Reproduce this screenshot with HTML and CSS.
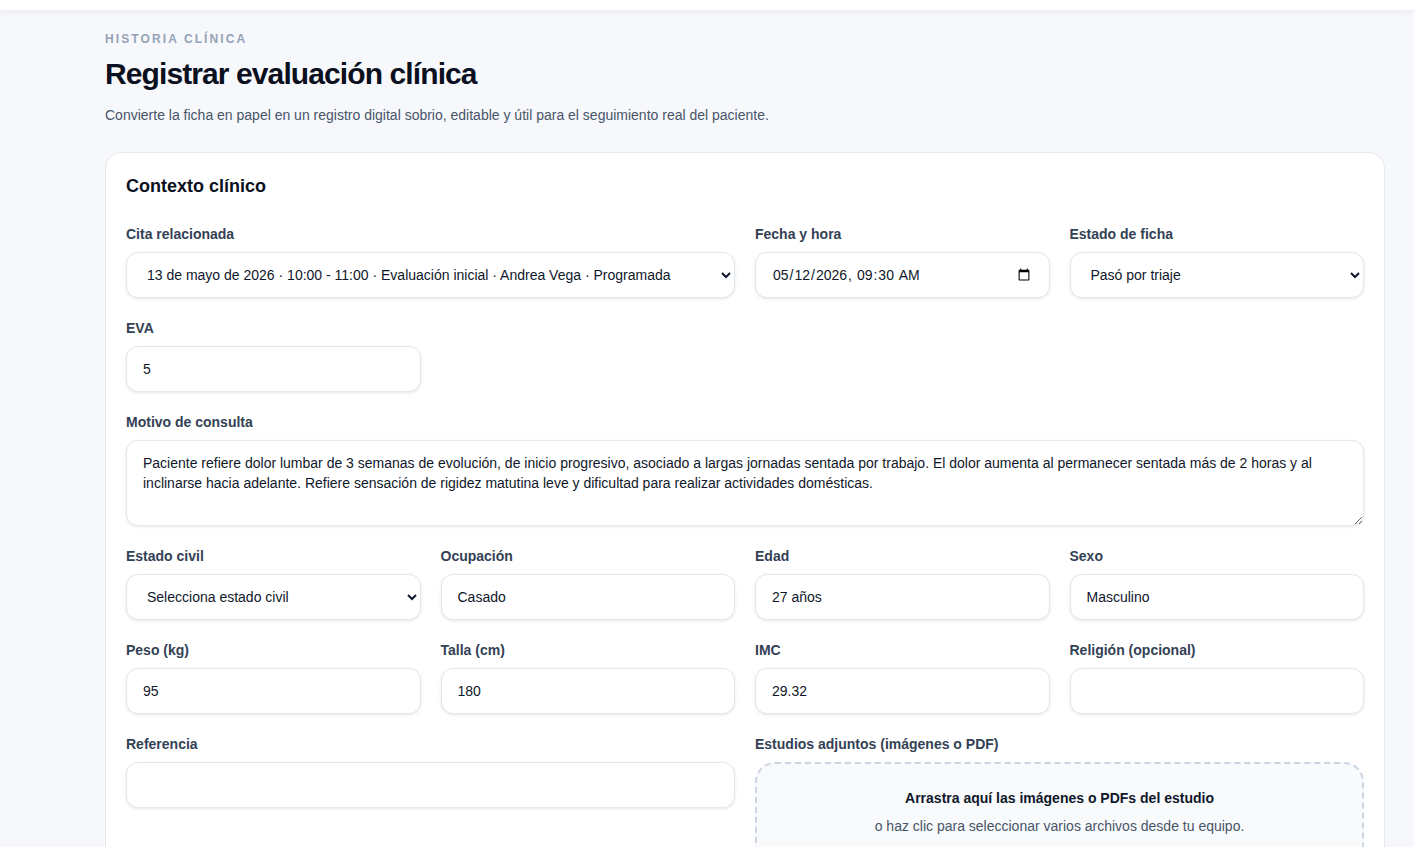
FILE: index.html
```html
<!DOCTYPE html>
<html lang="es">
  <head>
    <meta charset="UTF-8" />
    <meta name="viewport" content="width=device-width, initial-scale=1.0" />
    <title>Registrar evaluación clínica</title>
    <link rel="stylesheet" href="styles.css">
  </head>
  <body>
    <header class="topbar"></header>
    <main class="page">
      <p class="eyebrow">Historia clínica</p>
      <h1>Registrar evaluación clínica</h1>
      <p class="intro">Convierte la ficha en papel en un registro digital sobrio, editable y útil para el seguimiento real del paciente.</p>

      <section class="card">
        <h2>Contexto clínico</h2>
        <form class="grid">
          <div class="field span-2">
            <label for="cita">Cita relacionada</label>
            <select id="cita">
              <option>13 de mayo de 2026 · 10:00 - 11:00 · Evaluación inicial · Andrea Vega · Programada</option>
            </select>
          </div>
          <div class="field">
            <label for="fecha">Fecha y hora</label>
            <input type="datetime-local" id="fecha" value="2026-05-12T09:30" />
          </div>
          <div class="field">
            <label for="estado">Estado de ficha</label>
            <select id="estado">
              <option>Pasó por triaje</option>
            </select>
          </div>

          <div class="field">
            <label for="eva">EVA</label>
            <input type="text" id="eva" value="5" />
          </div>

          <div class="field span-4">
            <label for="motivo">Motivo de consulta</label>
            <textarea id="motivo" spellcheck="false">Paciente refiere dolor lumbar de 3 semanas de evolución, de inicio progresivo, asociado a largas jornadas sentada por trabajo. El dolor aumenta al permanecer sentada más de 2 horas y al inclinarse hacia adelante. Refiere sensación de rigidez matutina leve y dificultad para realizar actividades domésticas.</textarea>
          </div>

          <div class="field">
            <label for="civil">Estado civil</label>
            <select id="civil">
              <option>Selecciona estado civil</option>
            </select>
          </div>
          <div class="field">
            <label for="ocupacion">Ocupación</label>
            <input type="text" id="ocupacion" value="Casado" />
          </div>
          <div class="field">
            <label for="edad">Edad</label>
            <input type="text" id="edad" value="27 años" />
          </div>
          <div class="field">
            <label for="sexo">Sexo</label>
            <input type="text" id="sexo" value="Masculino" />
          </div>

          <div class="field">
            <label for="peso">Peso (kg)</label>
            <input type="text" id="peso" value="95" />
          </div>
          <div class="field">
            <label for="talla">Talla (cm)</label>
            <input type="text" id="talla" value="180" />
          </div>
          <div class="field">
            <label for="imc">IMC</label>
            <input type="text" id="imc" value="29.32" />
          </div>
          <div class="field">
            <label for="religion">Religión (opcional)</label>
            <input type="text" id="religion" />
          </div>

          <div class="field span-2">
            <label for="referencia">Referencia</label>
            <input type="text" id="referencia" />
          </div>
          <div class="field span-2">
            <label>Estudios adjuntos (imágenes o PDF)</label>
            <div class="dropzone">
              <strong>Arrastra aquí las imágenes o PDFs del estudio</strong>
              <span>o haz clic para seleccionar varios archivos desde tu equipo.</span>
            </div>
          </div>
        </form>
      </section>
    </main>
  </body>
</html>
```

FILE: styles.css
```css
* {
  margin: 0;
  padding: 0;
  box-sizing: border-box;
}
body {
  background-color: #f7f8fc;
  color: #0f172a;
  font-family: "Liberation Sans", Arial, sans-serif;
  font-size: 14px;
}
.topbar {
  height: 10px;
  background-color: #fff;
  box-shadow: 0 2px 8px rgba(15, 23, 42, 0.06);
}
.page {
  padding: 21px 29px 40px 105px;
}
.eyebrow {
  font-size: 12px;
  line-height: 16px;
  font-weight: bold;
  letter-spacing: 2.1px;
  text-transform: uppercase;
  color: #94a3b8;
}
h1 {
  margin-top: 9px;
  font-size: 30px;
  line-height: 36px;
  letter-spacing: -0.9px;
  color: #0b1020;
}
.intro {
  margin-top: 13px;
  line-height: 20px;
  color: #475569;
}
.card {
  margin-top: 27px;
  padding: 21px 20px 20px;
  background-color: #fff;
  border: 1px solid #e5e7eb;
  border-radius: 16px;
}
h2 {
  font-size: 18px;
  line-height: 24px;
  color: #0b1020;
}
.grid {
  margin-top: 26px;
  display: grid;
  grid-template-columns: repeat(4, 1fr);
  gap: 20px;
}
.field {
  display: flex;
  flex-direction: column;
  min-width: 0;
}
.span-2 {
  grid-column: span 2;
}
.span-4 {
  grid-column: span 4;
}
.field:nth-child(4) {
  grid-column: 1;
}
label {
  display: block;
  margin-bottom: 8px;
  font-size: 14px;
  line-height: 20px;
  font-weight: bold;
  color: #334155;
}
input,
select,
textarea {
  width: 100%;
  height: 46px;
  padding: 12px 16px;
  border: 1px solid #e2e8f0;
  border-radius: 12px;
  background-color: #fff;
  box-shadow: 0 1px 3px rgba(15, 23, 42, 0.1);
  font-family: inherit;
  font-size: 14px;
  line-height: 20px;
  color: #0f172a;
}
select {
  padding: 12px 10px 12px 16px;
}
textarea {
  height: 86px;
  resize: vertical;
}
.dropzone {
  display: flex;
  flex-direction: column;
  align-items: center;
  gap: 8px;
  padding: 24px 20px 60px;
  border: 2px dashed #cbd5e1;
  border-radius: 20px;
  background-color: #f8fafc;
  text-align: center;
}
.dropzone strong {
  line-height: 20px;
  color: #0f172a;
}
.dropzone span {
  line-height: 20px;
  color: #475569;
}
```
